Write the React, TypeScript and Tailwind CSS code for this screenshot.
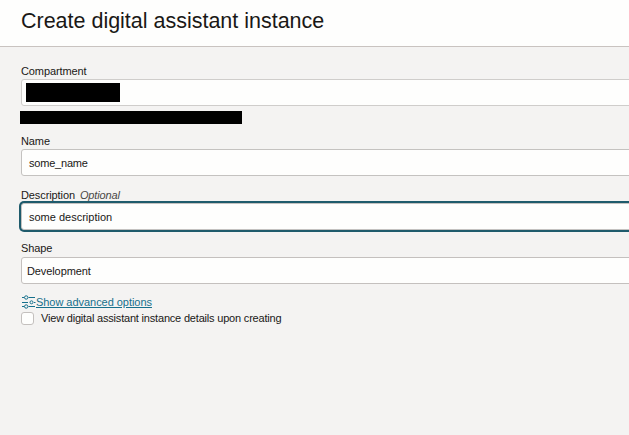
import React from "react";

function Label({ children }: { children: React.ReactNode }) {
  return <div className="h-[14px] text-[11px] leading-[14px] tracking-[-0.1px] whitespace-pre">{children}</div>;
}

function SlidersIcon() {
  return (
    <svg width="14" height="14" viewBox="0 0 14 14" fill="none" stroke="#16708c" strokeWidth="1" className="shrink-0">
      <path d="M0 2.5h2.2M6.5 2.5h6.5M0 7.5h6M12 7.5h1.5M0 11.5h2.2M6.5 11.5h6.5" />
      <circle cx="4.2" cy="2.5" r="1.7" />
      <circle cx="9.5" cy="7.3" r="1.5" />
      <circle cx="4.2" cy="11.5" r="1.7" />
    </svg>
  );
}

export default function App() {
  return (
    <div className="h-[435px] w-[629px] overflow-hidden bg-[#f4f3f2] font-['Liberation_Sans',Arial,sans-serif] text-[#1a1816]">
      <header className="flex h-[47px] items-center border-b border-[#c9c3c0] bg-[#fefefd] pb-1 pl-[21px]">
        <h1 className="text-[21.5px] leading-6 whitespace-nowrap tracking-[-0.01px]">Create digital assistant instance</h1>
      </header>
      <form className="pt-[17px] pl-[21px]">
        <Label>Compartment</Label>
        <div className="mt-px flex h-[27px] w-[640px] rounded-[3px] border border-[#cfcdcb] bg-[#fefefd] pt-[3px] pl-1">
          <div className="h-[19px] w-[94px] bg-black" />
        </div>
        <div className="mt-[5px] -ml-px h-[13px] w-[222px] bg-black" />
        <div className="mt-[10px]"><Label>Name</Label></div>
        <div className="mt-px flex h-[27px] w-[640px] items-center rounded-[3px] border border-[#c4c2c0] bg-[#fefefd] pt-0.5 pl-[7px] text-[11px] tracking-[-0.2px]">some_name</div>
        <div className="mt-[12px]"><Label>Description<i className="ml-[5px] text-[#4a4846] tracking-[-0.15px]">Optional</i></Label></div>
        <div className="mt-px flex h-[27px] w-[640px] items-center rounded-[3px] border border-[#c4c2c0] bg-[#fefefd] pt-0.5 pl-[7px] text-[11px] ring-2 ring-[#1f5b6c]">some description</div>
        <div className="mt-[11px]"><Label>Shape</Label></div>
        <div className="mt-[2px] flex h-[27px] w-[640px] items-center rounded-[3px] border border-[#c4c0be] bg-[#fefefd] pt-0.5 pl-[5px] text-[11px] tracking-[-0.1px]">Development</div>
        <a className="mt-[10px] flex h-4 items-center pl-px text-[11px] leading-4 text-[#16708c]">
          <SlidersIcon />
          <span className="underline underline-offset-1 tracking-[-0.04px]">Show advanced options</span>
        </a>
        <label className="flex h-4 items-center gap-[7px] text-[11px] leading-4">
          <span className="size-[13px] rounded-[3px] border border-[#c4c0be] bg-[#fefefd]" />
          <span className="tracking-[-0.19px]">View digital assistant instance details upon creating</span>
        </label>
      </form>
    </div>
  );
}
